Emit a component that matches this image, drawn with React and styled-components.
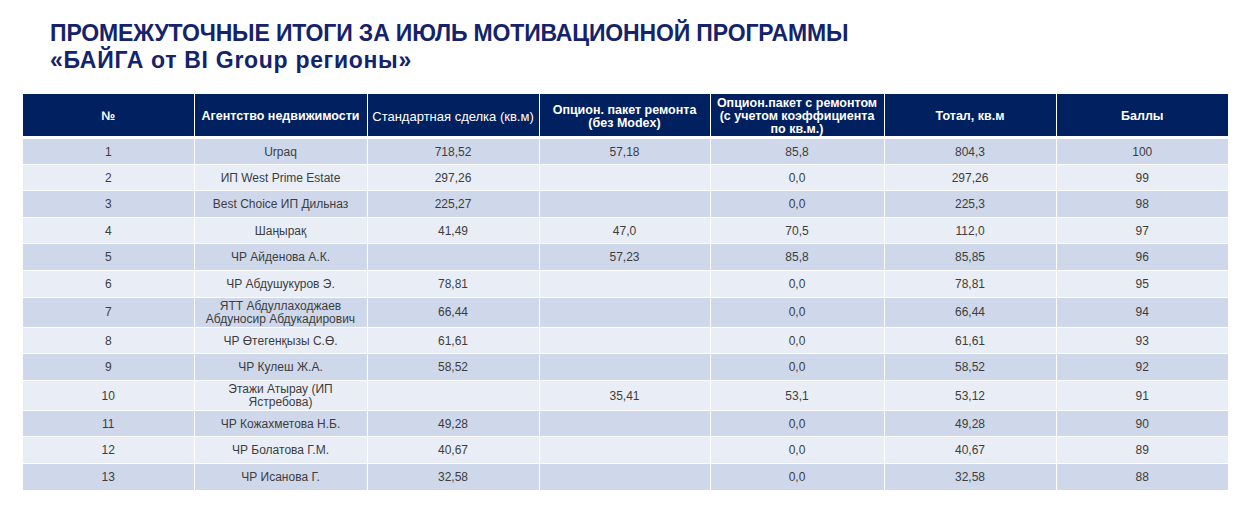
import styled, { createGlobalStyle } from 'styled-components';

const GlobalStyle = createGlobalStyle`
  body {
    margin: 0;
    background: #fff;
    font-family: "Liberation Sans", Arial, sans-serif;
  }
`

const rows = [
  ['1', 'Urpaq', '718,52', '57,18', '85,8', '804,3', '100'],
  ['2', 'ИП West Prime Estate', '297,26', '', '0,0', '297,26', '99'],
  ['3', 'Best Choice ИП Дильназ', '225,27', '', '0,0', '225,3', '98'],
  ['4', 'Шаңырақ', '41,49', '47,0', '70,5', '112,0', '97'],
  ['5', 'ЧР Айденова А.К.', '', '57,23', '85,8', '85,85', '96'],
  ['6', 'ЧР Абдушукуров Э.', '78,81', '', '0,0', '78,81', '95'],
  ['7', ['ЯТТ Абдуллаходжаев', 'Абдуносир Абдукадирович'], '66,44', '', '0,0', '66,44', '94'],
  ['8', 'ЧР Өтегенқызы С.Ө.', '61,61', '', '0,0', '61,61', '93'],
  ['9', 'ЧР Кулеш Ж.А.', '58,52', '', '0,0', '58,52', '92'],
  ['10', ['Этажи Атырау (ИП', 'Ястребова)'], '', '35,41', '53,1', '53,12', '91'],
  ['11', 'ЧР Кожахметова Н.Б.', '49,28', '', '0,0', '49,28', '90'],
  ['12', 'ЧР Болатова Г.М.', '40,67', '', '0,0', '40,67', '89'],
  ['13', 'ЧР Исанова Г.', '32,58', '', '0,0', '32,58', '88'],
]

const widths = [171, 173, 172, 171, 174, 172, 172]

function Lines({ text }) {
  if (!Array.isArray(text)) return text
  return text.map((line, i) => (
    <span key={i}>
      {i > 0 && <br />}
      {line}
    </span>
  ))
}

function App() {
  return (
    <Page>
      <GlobalStyle />
      <Title>
        ПРОМЕЖУТОЧНЫЕ ИТОГИ ЗА ИЮЛЬ МОТИВАЦИОННОЙ ПРОГРАММЫ
        <br />
        <Subtitle>«БАЙГА от BI Group регионы»</Subtitle>
      </Title>

      <Table>
        <colgroup>
          {widths.map((w, i) => <col key={i} style={{ width: w }} />)}
        </colgroup>
        <thead>
          <tr>
            <Th><HeadLabel>№</HeadLabel></Th>
            <Th><HeadLabel>Агентство недвижимости</HeadLabel></Th>
            <Th $light><HeadLabel>Стандартная сделка (кв.м)</HeadLabel></Th>
            <Th><HeadLabel>Опцион. пакет ремонта<br />(без Modex)</HeadLabel></Th>
            <Th>
              <HeadLabel $tight>
                Опцион.пакет с ремонтом<br />(с учетом коэффициента<br />по кв.м.)
              </HeadLabel>
            </Th>
            <Th><HeadLabel>Тотал, кв.м</HeadLabel></Th>
            <Th><HeadLabel>Баллы</HeadLabel></Th>
          </tr>
        </thead>
        <tbody>
          {rows.map((row, i) => (
            <Row key={row[0]} $odd={i % 2 === 0} $tall={Array.isArray(row[1])}>
              {row.map((cell, j) => (
                <Td key={j}><Lines text={cell} /></Td>
              ))}
            </Row>
          ))}
        </tbody>
      </Table>
    </Page>
  )
}

export default App

const Page = styled.div`
  width: 1252px;
  height: 508px;
  padding: 20px 0 0 23px;
  box-sizing: border-box;
  overflow: hidden;
`

const Title = styled.h1`
  margin: 0 0 20px 27px;
  font-size: 23px;
  line-height: 27px;
  font-weight: 700;
  color: #14236b;
  letter-spacing: -0.15px;
`

const Subtitle = styled.span`
  letter-spacing: 0.7px;
`

const Table = styled.table`
  width: 1205px;
  table-layout: fixed;
  border-collapse: collapse;
  font-size: 12px;
`

const Th = styled.th`
  height: 42px;
  padding: 0 1px;
  background: #002060;
  color: #fff;
  font-size: ${p => (p.$light ? '13px' : '12.5px')};
  font-weight: ${p => (p.$light ? 400 : 700)};
  text-align: center;
  vertical-align: middle;
  white-space: nowrap;
  border-left: 1px solid #fff;
  border-right: 1px solid #fff;
  border-bottom: 3px solid #fff;

  &:first-child {
    border-left: none;
  }
  &:last-child {
    border-right: none;
  }
`

const HeadLabel = styled.div`
  padding-top: ${p => (p.$tight ? '2px' : '4px')};
  line-height: ${p => (p.$tight ? '13px' : '13.5px')};
`

const Row = styled.tr`
  height: ${p => (p.$tall ? '29.5px' : '26.6px')};
  background: ${p => (p.$odd ? '#cfd8ea' : '#e9edf5')};
`

const Td = styled.td`
  padding: 2px 2px 0;
  color: #3d3d3d;
  line-height: 13.5px;
  text-align: center;
  vertical-align: middle;
  border: 1px solid #fff;

  &:first-child {
    border-left: none;
  }
  &:last-child {
    border-right: none;
  }
`
